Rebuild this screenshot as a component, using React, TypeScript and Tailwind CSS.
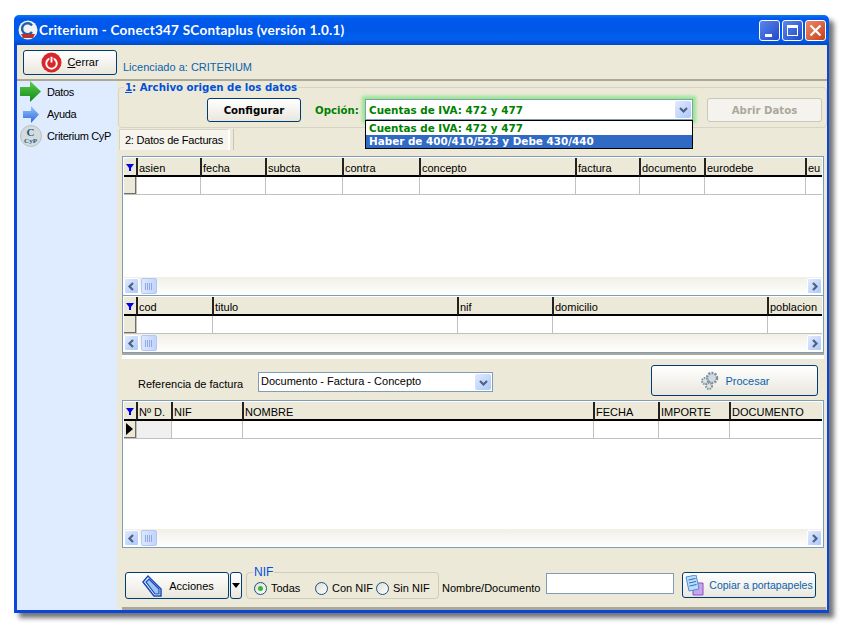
const sans = "font-['Liberation_Sans',Arial,sans-serif]";
const wide = "font-['DejaVu_Sans',Verdana,sans-serif]";

const grid1 = [
  { t: "asien", w: "w-[64px]" },
  { t: "fecha", w: "w-[65px]" },
  { t: "subcta", w: "w-[77px]" },
  { t: "contra", w: "w-[77px]" },
  { t: "concepto", w: "w-[156px]" },
  { t: "factura", w: "w-[64px]" },
  { t: "documento", w: "w-[65px]" },
  { t: "eurodebe", w: "w-[101px]" },
  { t: "eu", w: "w-[17px]" },
];
const grid2 = [
  { t: "cod", w: "w-[76px]" },
  { t: "titulo", w: "w-[245px]" },
  { t: "nif", w: "w-[95px]" },
  { t: "domicilio", w: "w-[215px]" },
  { t: "poblacion", w: "w-[55px]" },
];
const grid3 = [
  { t: "Nº D.", w: "w-[35px]" },
  { t: "NIF", w: "w-[71px]" },
  { t: "NOMBRE", w: "w-[351px]" },
  { t: "FECHA", w: "w-[65px]" },
  { t: "IMPORTE", w: "w-[71px]" },
  { t: "DOCUMENTO", w: "w-[93px]" },
];

const Chevron = ({ dir }: { dir: "left" | "right" | "down" }) => (
  <svg width="9" height="9" viewBox="0 0 9 9" fill="none" stroke="#4d6185" strokeWidth="2.2">
    {dir === "left" && <path d="M6 1 L2.5 4.5 L6 8" />}
    {dir === "right" && <path d="M3 1 L6.5 4.5 L3 8" />}
    {dir === "down" && <path d="M1 3 L4.5 6.5 L8 3" />}
  </svg>
);

const ScrollBtn = ({ dir }: { dir: "left" | "right" }) => (
  <div className="w-[15px] h-[16px] rounded-[2px] border border-white bg-gradient-to-br from-[#e1eafe] to-[#aec8f7] flex items-center justify-center">
    <Chevron dir={dir} />
  </div>
);

const ScrollBar = () => (
  <div className="h-[18px] flex items-center bg-gradient-to-b from-[#f1efe6] to-white">
    <ScrollBtn dir="left" />
    <div className="ml-[2px] w-[16px] h-[16px] rounded-[2px] border border-[#b4c8f6] bg-gradient-to-r from-[#dde7fd] to-[#c3d4fb] flex items-center justify-center">
      <svg width="8" height="7" viewBox="0 0 8 7" stroke="#8fa8e8" strokeWidth="1">
        <path d="M0.5 0V7M2.5 0V7M4.5 0V7M6.5 0V7" />
      </svg>
    </div>
    <div className="flex-1" />
    <ScrollBtn dir="right" />
  </div>
);

const DataGrid = ({
  columns,
  boxClass,
  active,
  firstGrey,
}: {
  columns: { t: string; w: string }[];
  boxClass: string;
  active?: boolean;
  firstGrey?: boolean;
}) => (
  <div className={`w-[702px] bg-white border border-[#7f9db9] px-[1px] pt-[1px] flex flex-col ${boxClass}`}>
    <div className="flex h-[19px]">
      <div className="w-[12px] bg-[#ece9d8] border-b-2 border-black flex items-center justify-center">
        <svg width="8" height="8" viewBox="0 0 8 8">
          <path d="M0 1H8L5 5V8H3V5Z" fill="#0000e0" />
        </svg>
      </div>
      {columns.map((c) => (
        <div
          key={c.t}
          className={`${c.w} shrink-0 bg-[#ece9d8] border-b-2 border-b-black border-l-2 border-l-[#222] pl-[1px] pt-[3px] overflow-hidden whitespace-nowrap text-[11px] leading-[14px] text-black`}
        >
          {c.t}
        </div>
      ))}
    </div>
    <div className="flex h-[18px] border-b border-[#c0c0c0]">
      <div className="w-[12px] bg-[#ece9d8] border-r border-b border-[#716f64] flex items-center">
        {active && (
          <svg width="10" height="12" viewBox="0 0 10 12">
            <path d="M2 0L9 6L2 12Z" fill="#000" />
          </svg>
        )}
      </div>
      {columns.map((c, i) => (
        <div
          key={c.t}
          className={`${c.w} shrink-0 border-l border-[#c0c0c0] ${firstGrey && i === 0 ? "bg-[#f0f0f0]" : "bg-white"}`}
        />
      ))}
    </div>
    <div className="flex-1" />
    <ScrollBar />
  </div>
);

const XpButton = ({ className, children }: { className: string; children: React.ReactNode }) => (
  <div
    className={`border border-[#003c74] rounded-[3px] bg-gradient-to-b from-white to-[#e9e7dd] flex items-center justify-center ${className}`}
  >
    {children}
  </div>
);

const Radio = ({ checked }: { checked?: boolean }) => (
  <div className="w-[13px] h-[13px] rounded-full border border-[#1c5180] bg-gradient-to-br from-[#dcdcd6] to-white flex items-center justify-center">
    {checked && <div className="w-[5px] h-[5px] rounded-full bg-[#38b838]" />}
  </div>
);

const CaptionBtn = ({ className, children }: { className: string; children: React.ReactNode }) => (
  <div className={`w-[21px] h-[21px] rounded-[3px] border border-white flex items-center justify-center ${className}`}>
    {children}
  </div>
);

const SideItem = ({ icon, label, className }: { icon: React.ReactNode; label: string; className: string }) => (
  <div className={`flex items-center ${className}`}>
    <div className="w-[27px] shrink-0 flex justify-center">{icon}</div>
    <span className="ml-[3px] text-[11px] tracking-[-0.35px] text-black whitespace-nowrap">{label}</span>
  </div>
);

export default function App() {
  return (
    <div className={`w-[843px] h-[627px] bg-white pl-[14px] pt-[15px] overflow-hidden ${sans}`}>
      <div className="w-[815px] h-[598px] flex flex-col rounded-t-[5px] shadow-[5px_5px_5px_rgba(0,0,0,0.55)]">
        {/* Title bar */}
        <div className="h-[30px] shrink-0 rounded-t-[5px] flex items-center pl-[4px] pr-[3px] bg-[linear-gradient(180deg,#0a7bf0_0%,#0058ee_12%,#0057e8_50%,#0060f0_80%,#0047c8_100%)]">
          <svg width="20" height="20" viewBox="0 0 20 20">
            <circle cx="10" cy="10" r="9.5" fill="#f2f2f2" />
            <path d="M14 5.5A5.5 5.5 0 1 0 14 12" fill="none" stroke="#1d5fa8" strokeWidth="2.4" />
            <path d="M3 14h14l-2 4H5Z" fill="#b8322e" />
          </svg>
          <span className="ml-[1px] text-white font-bold text-[13.5px] tracking-[0.25px] whitespace-nowrap font-['Lato',sans-serif]">
            Criterium - Conect347 SContaplus (versión 1.0.1)
          </span>
          <div className="ml-auto flex gap-[2px]">
            <CaptionBtn className="bg-gradient-to-br from-[#5a86ef] to-[#2348c4] items-end pb-[3px] justify-start pl-[5px]">
              <div className="w-[7px] h-[3px] bg-white" />
            </CaptionBtn>
            <CaptionBtn className="bg-gradient-to-br from-[#5a86ef] to-[#2348c4]">
              <div className="w-[11px] h-[11px] border border-white border-t-[3px]" />
            </CaptionBtn>
            <CaptionBtn className="bg-gradient-to-br from-[#ea8a6a] to-[#c83c12]">
              <svg width="13" height="13" viewBox="0 0 13 13" stroke="#fff" strokeWidth="2.2">
                <path d="M1.5 1.5L11.5 11.5M11.5 1.5L1.5 11.5" />
              </svg>
            </CaptionBtn>
          </div>
        </div>

        {/* Body */}
        <div className="flex-1 min-h-0 flex flex-col bg-[#ece9d8] border-l-[3px] border-r-[2px] border-b-[3px] border-[#0a46dc]">
          {/* Toolbar */}
          <div className="h-[36px] shrink-0 flex items-start pl-[6px] pt-[5px] border-b-2 border-[#aca899]">
            <XpButton className="w-[94px] h-[25px] text-[11px] text-black">
              <svg width="21" height="21" viewBox="0 0 22 22" fill="none">
                <circle cx="11" cy="11" r="10.5" fill="#d9262b" />
                <circle cx="11" cy="12" r="5.5" stroke="#fff" strokeWidth="2" />
                <path d="M11 4.5V11" stroke="#d9262b" strokeWidth="4.5" />
                <path d="M11 5V11" stroke="#fff" strokeWidth="2" />
              </svg>
              <span className="ml-[5px]">
                <span className="underline">C</span>errar
              </span>
            </XpButton>
            <span className="ml-[6px] mt-[10px] text-[11px] leading-[14px] text-[#0b62ac]">Licenciado a: CRITERIUM</span>
          </div>

          <div className="flex-1 min-h-0 flex">
            {/* Sidebar */}
            <div className="w-[100px] shrink-0 bg-[#dfecff] pt-[1px]">
              <SideItem
                className="h-[20px]"
                label="Datos"
                icon={
                  <svg width="21" height="21" viewBox="0 0 21 21" className="-mt-[1px]">
                    <defs>
                      <linearGradient id="greenArrow" x1="0" y1="0" x2="0" y2="1">
                        <stop offset="0" stopColor="#5ccc4c" />
                        <stop offset="1" stopColor="#108a18" />
                      </linearGradient>
                    </defs>
                    <path d="M0 6H10V0L21 10.5L10 21V15H0Z" fill="url(#greenArrow)" />
                  </svg>
                }
              />
              <SideItem
                className="h-[24px]"
                label="Ayuda"
                icon={
                  <svg width="16" height="17" viewBox="0 0 16 17">
                    <defs>
                      <linearGradient id="blueArrow" x1="0" y1="0" x2="0" y2="1">
                        <stop offset="0" stopColor="#9cc4fa" />
                        <stop offset="1" stopColor="#2a68e0" />
                      </linearGradient>
                    </defs>
                    <path d="M0 5H8V0L16 8.5L8 17V12H0Z" fill="url(#blueArrow)" />
                  </svg>
                }
              />
              <SideItem
                className="h-[20px]"
                label="Criterium CyP"
                icon={
                  <div className="w-[22px] h-[22px] rounded-full bg-[#d5dbdc] border border-[#b8c0c0] flex flex-col items-center justify-center font-['Liberation_Serif',serif] font-bold text-[#1c5a80]">
                    <span className="text-[11px] leading-[10px]">C</span>
                    <span className="text-[7px] leading-[8px]">CyP</span>
                  </div>
                }
              />
            </div>

            {/* Main */}
            <div className="flex-1 min-w-0 flex flex-col">
              {/* Group 1 */}
              <div className="relative h-[47px] shrink-0 pt-[6px] pl-[1px]">
                <div className="h-[41px] border border-[#d8d4c4] rounded-[4px] flex items-start pt-[10px]">
                  <XpButton className={`ml-[88px] w-[94px] h-[24px] pt-[1px] font-bold text-[10.2px] text-black ${wide}`}>
                    Configurar
                  </XpButton>
                  <span className={`ml-[14px] mt-[5px] w-[44px] font-bold text-[10.2px] leading-[16px] text-[#008000] ${wide}`}>Opción:</span>
                  <div className={`ml-[6px] mt-[1px] w-[328px] h-[21px] bg-white border border-[#7f9db9] shadow-[0_0_3px_3px_#96e88e] flex items-center pl-[3px] pr-[1px] font-bold text-[10.4px] text-[#008000] ${wide}`}>
                    <span className="pt-[2px]">Cuentas de IVA: 472 y 477</span>
                    <div className="ml-auto w-[16px] h-[17px] rounded-[2px] bg-gradient-to-br from-[#e1eafe] to-[#aec8f7] flex items-center justify-center">
                      <Chevron dir="down" />
                    </div>
                  </div>
                  <div className={`ml-[14px] w-[115px] h-[24px] pt-[1px] border border-[#cac8bb] rounded-[3px] bg-[#f4f3ee] flex items-center justify-center font-bold text-[10.2px] text-[#aca899] ${wide}`}>
                    Abrir Datos
                  </div>
                </div>
                <div className="absolute left-[7px] top-0 h-[14px] px-[1px] bg-[#ece9d8] font-bold text-[10.2px] leading-[14px] text-[#0050d8] whitespace-nowrap font-['DejaVu_Sans',sans-serif]">
                  <span className="underline">1</span>: Archivo origen de los datos
                </div>
                {/* open option list */}
                <div className={`absolute z-10 left-[248px] top-[39px] w-[328px] h-[29px] bg-white border border-black font-bold text-[10.4px] leading-[13px] whitespace-nowrap ${wide}`}>
                  <div className="h-[14px] pl-[3px] pt-[1px] text-[#008000]">Cuentas de IVA: 472 y 477</div>
                  <div className="h-[13px] pl-[3px] bg-[#316ac5] text-white">Haber de 400/410/523 y Debe 430/440</div>
                </div>
              </div>

              {/* Tab strip */}
              <div className="h-[22px] shrink-0 flex pl-[2px] pt-[1px]">
                <div className="w-[111px] h-[21px] bg-[#f6f4ec] border-t border-l border-[#d8d4c4] border-r-2 border-r-[#ffffff] flex items-center justify-center text-[11px] tracking-[-0.2px] text-black whitespace-nowrap">
                  2: Datos de Facturas
                </div>
                <div className="ml-[3px] h-[21px] border-l border-[#c8c5b4]" />
              </div>

              {/* Tab page */}
              <div className="flex-1 min-h-0 flex flex-col pl-[5px] pt-[6px]">
                <DataGrid columns={grid1} boxClass="h-[140px] shrink-0" />
                <DataGrid columns={grid2} boxClass="h-[58px] shrink-0 -mt-[1px]" />
                <div className="h-[6px] shrink-0 border-t-2 border-[#aca899] bg-white w-[702px]" />
                <div className="h-[41px] shrink-0 w-[702px] flex items-start pl-[16px]">
                  <span className="mt-[18px] w-[104px] shrink-0 text-[11px] leading-[14px] text-black whitespace-nowrap">Referencia de factura</span>
                  <div className="ml-[16px] mt-[13px] w-[235px] h-[20px] bg-white border border-[#7f9db9] flex items-center pl-[2px] pr-[1px] text-[11px] text-black">
                    <span className="pb-[2px]">Documento - Factura - Concepto</span>
                    <div className="ml-auto w-[16px] h-[16px] rounded-[2px] bg-gradient-to-br from-[#e1eafe] to-[#aec8f7] flex items-center justify-center">
                      <Chevron dir="down" />
                    </div>
                  </div>
                  <XpButton className="ml-[158px] mt-[6px] w-[167px] h-[31px] text-[11px] text-[#0b62ac]">
                    <svg width="22" height="22" viewBox="0 0 22 22" fill="none">
                      <circle cx="13" cy="8" r="5" fill="#cfdbe4" stroke="#84929c" strokeWidth="2.5" strokeDasharray="2 1.2" />
                      <circle cx="6" cy="11" r="3" fill="#dde4e8" stroke="#84929c" strokeWidth="2" strokeDasharray="1.5 1" />
                      <circle cx="10" cy="16" r="3" fill="#dde4e8" stroke="#84929c" strokeWidth="2" strokeDasharray="1.5 1" />
                    </svg>
                    <span className="ml-[4px] pt-[1px]">Procesar</span>
                  </XpButton>
                </div>
                <DataGrid columns={grid3} boxClass="h-[148px] shrink-0" active firstGrey />

                {/* Footer */}
                <div className="flex-1 min-h-0 w-[704px] flex items-start pl-[3px] pt-[24px] border-b-[3px] border-[#aca899]">
                  <XpButton className="w-[104px] h-[27px] text-[11px] text-black">
                    <svg width="24" height="24" viewBox="0 0 24 24" fill="none">
                      <path d="M3 8L8 2L21 15V22H14Z" fill="#fff" stroke="#1848b8" strokeWidth="1.5" />
                      <path d="M6 8L9 5L19 15V20H15Z" fill="#9cc4f4" stroke="#1848b8" strokeWidth="1.2" />
                    </svg>
                    <span className="ml-[5px] pt-[1px]">Acciones</span>
                  </XpButton>
                  <XpButton className="ml-[1px] w-[12px] h-[27px]">
                    <svg width="8" height="5" viewBox="0 0 8 5">
                      <path d="M0 0H8L4 5Z" fill="#000" />
                    </svg>
                  </XpButton>
                  <div className="relative ml-[4px] w-[193px] h-[27px] border border-[#d0ccbc] rounded-[4px] text-[11px] text-black">
                    <div className="absolute left-[6px] -top-[7px] px-[1px] bg-[#ece9d8] text-[12px] leading-[13px] text-[#0050d8]">NIF</div>
                    <div className="absolute left-[7px] top-[9px] flex items-center gap-[4px]">
                      <Radio checked />
                      <span className="leading-[13px]">Todas</span>
                    </div>
                    <div className="absolute left-[68px] top-[9px] flex items-center gap-[4px]">
                      <Radio />
                      <span className="leading-[13px] whitespace-nowrap">Con NIF</span>
                    </div>
                    <div className="absolute left-[129px] top-[9px] flex items-center gap-[4px]">
                      <Radio />
                      <span className="leading-[13px] whitespace-nowrap">Sin NIF</span>
                    </div>
                  </div>
                  <span className="ml-[3px] mt-[9px] w-[98px] shrink-0 text-[11px] leading-[14px] text-black whitespace-nowrap">Nombre/Documento</span>
                  <div className="ml-[6px] mt-[1px] w-[128px] h-[21px] bg-white border border-[#7f9db9]" />
                  <XpButton className="ml-[8px] w-[134px] h-[26px] text-[10.5px] text-[#0b62ac] whitespace-nowrap">
                    <svg width="20" height="21" viewBox="0 0 20 21" className="shrink-0">
                      <path d="M8 8H18V20H8Z" fill="#c9a4ec" stroke="#8a50c8" />
                      <path d="M1 2L11 0L14 14L4 16Z" fill="#bcdcfa" stroke="#4a90d8" />
                      <path d="M3.5 5L10.5 3.5M4 8L11 6.5M4.5 11L11.5 9.5" stroke="#2a70c0" />
                    </svg>
                    <span className="ml-[4px] pt-[1px]">Copiar a portapapeles</span>
                  </XpButton>
                </div>
              </div>
            </div>
          </div>
        </div>
      </div>
    </div>
  );
}
